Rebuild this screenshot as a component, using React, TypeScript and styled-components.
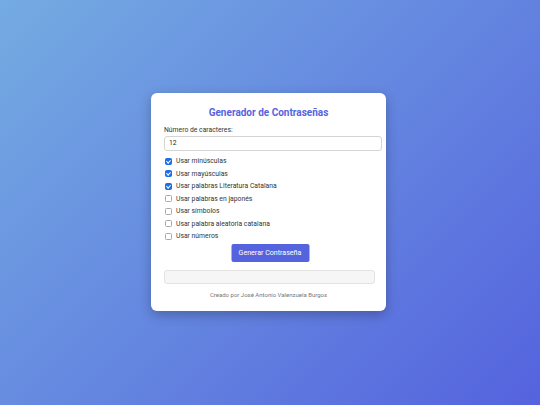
import styled, { createGlobalStyle } from "styled-components";

const GlobalStyle = createGlobalStyle`
  html, body {
    margin: 0;
    padding: 0;
  }

  body {
    font-family: Roboto, "Liberation Sans", sans-serif;
    background: linear-gradient(135deg, #74abe2, #5563de);
    min-height: 100vh;
  }
`;

const Page = styled.div`
  display: flex;
  align-items: center;
  justify-content: center;
  min-height: 100vh;
  padding-right: 3px;
  padding-bottom: 1px;
  box-sizing: border-box;
`;

const Card = styled.div`
  box-sizing: border-box;
  width: 235px;
  padding: 13px 13px 12px;
  background: #ffffff;
  border-radius: 6px;
  box-shadow: 0 4px 12px rgba(0, 0, 0, 0.25);
`;

const Title = styled.h2`
  margin: 0;
  font-size: 10px;
  line-height: 13px;
  font-weight: 700;
  text-align: center;
  color: #5563de;
`;

const Label = styled.label`
  display: block;
  margin-top: 7px;
  font-size: 6.8px;
  line-height: 9px;
  color: #333333;
`;

const NumberInput = styled.input`
  box-sizing: border-box;
  display: block;
  width: 218px;
  height: 15px;
  margin-top: 1px;
  padding: 0 4px;
  border: 1px solid #d4d4d4;
  border-radius: 3px;
  font-family: inherit;
  font-size: 6.8px;
  color: #222222;
  outline: none;
`;

const OptionList = styled.div`
  display: flex;
  flex-direction: column;
  margin-top: 4px;
`;

const Option = styled.label`
  display: flex;
  align-items: center;
  gap: 4px;
  height: 12.5px;
  padding-left: 1px;
  font-size: 6.8px;
  color: #333333;
`;

const Check = styled.input`
  appearance: none;
  position: relative;
  box-sizing: border-box;
  width: 7px;
  height: 7px;
  margin: 0;
  border: 1px solid #a8a8a8;
  border-radius: 1.5px;
  background: #ffffff;

  &:checked {
    border-color: #1a6fe6;
    background: #1a6fe6;
  }

  &:checked::after {
    content: "";
    position: absolute;
    left: 1.4px;
    top: 0px;
    width: 1.6px;
    height: 3.2px;
    border: solid #ffffff;
    border-width: 0 1px 1px 0;
    transform: rotate(45deg);
  }
`;

const GenerateButton = styled.button`
  display: block;
  width: 78px;
  height: 18px;
  margin: 1.5px auto 0;
  transform: translateX(1.5px);
  padding: 0;
  border: none;
  border-radius: 2px;
  background: #5563de;
  color: #ffffff;
  font-family: inherit;
  font-size: 7.1px;
  cursor: pointer;
`;

const Result = styled.div`
  box-sizing: border-box;
  width: 211px;
  height: 14px;
  margin-top: 8px;
  border: 1px solid #e3e3e3;
  border-radius: 3px;
  background: #f6f6f6;
`;

const Footer = styled.p`
  margin: 6.5px 0 0;
  font-size: 6px;
  line-height: 9px;
  text-align: center;
  color: #777777;
`;

const options = [
  { label: "Usar minúsculas", checked: true },
  { label: "Usar mayúsculas", checked: true },
  { label: "Usar palabras Literatura Catalana", checked: true },
  { label: "Usar palabras en japonés", checked: false },
  { label: "Usar símbolos", checked: false },
  { label: "Usar palabra aleatoria catalana", checked: false },
  { label: "Usar números", checked: false },
];

function App() {
  return (
    <>
      <GlobalStyle />
      <Page>
        <Card>
          <Title>Generador de Contraseñas</Title>
          <Label htmlFor="length">Número de caracteres:</Label>
          <NumberInput id="length" type="text" defaultValue="12" />
          <OptionList>
            {options.map((option) => (
              <Option key={option.label}>
                <Check type="checkbox" defaultChecked={option.checked} />
                {option.label}
              </Option>
            ))}
          </OptionList>
          <GenerateButton>Generar Contraseña</GenerateButton>
          <Result />
          <Footer>Creado por José Antonio Valenzuela Burgos</Footer>
        </Card>
      </Page>
    </>
  );
}

export default App;
